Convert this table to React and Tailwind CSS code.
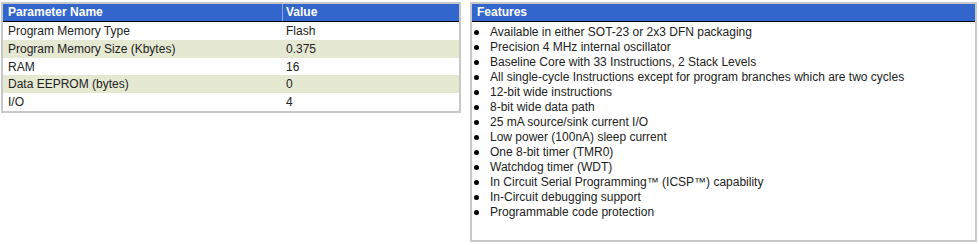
import React from "react";

const params = [
  ["Program Memory Type", "Flash"],
  ["Program Memory Size (Kbytes)", "0.375"],
  ["RAM", "16"],
  ["Data EEPROM (bytes)", "0"],
  ["I/O", "4"],
];

const features = [
  "Available in either SOT-23 or 2x3 DFN packaging",
  "Precision 4 MHz internal oscillator",
  "Baseline Core with 33 Instructions, 2 Stack Levels",
  "All single-cycle Instructions except for program branches which are two cycles",
  "12-bit wide instructions",
  "8-bit wide data path",
  "25 mA source/sink current I/O",
  "Low power (100nA) sleep current",
  "One 8-bit timer (TMR0)",
  "Watchdog timer (WDT)",
  "In Circuit Serial Programming™ (ICSP™) capability",
  "In-Circuit debugging support",
  "Programmable code protection",
];

export default function App() {
  return (
    <div
      className="flex items-start w-[979px] h-[245px] bg-white pt-[2px] pl-[1px] text-[12px] text-[#222]"
      style={{ fontFamily: '"Liberation Sans", Arial, sans-serif' }}
    >
      {/* Parameter table */}
      <div className="w-[460px] border-2 border-[#c8c8c8]">
        <div className="flex h-[18px] bg-[#3366cc] border-b border-black text-white font-bold leading-[17px]">
          <div className="w-[279px] pl-[5px]">Parameter Name</div>
          <div className="flex-1 border-l border-[#8fa8e0] pl-[3px]">Value</div>
        </div>
        {params.map(([name, value], i) => (
          <div
            key={name}
            className={`flex h-[17.8px] items-center ${i % 2 ? "bg-[#e6e9d2]" : "bg-white"}`}
          >
            <div className="w-[279px] pl-[5px]">{name}</div>
            <div className="flex-1 pl-[4px]">{value}</div>
          </div>
        ))}
      </div>

      {/* Features */}
      <div className="ml-[9px] w-[507px] h-[240px] border-2 border-[#c8c8c8]">
        <div className="h-[18px] bg-[#3366cc] border-b border-black text-white font-bold leading-[17px] pl-[5px]">
          Features
        </div>
        <ul className="pt-[3px] leading-[15px]">
          {features.map((f) => (
            <li key={f} className="flex items-center">
              <span className="ml-[2px] mr-[11px] w-[5px] h-[5px] rounded-full bg-black shrink-0" />
              {f}
            </li>
          ))}
        </ul>
      </div>
    </div>
  );
}
